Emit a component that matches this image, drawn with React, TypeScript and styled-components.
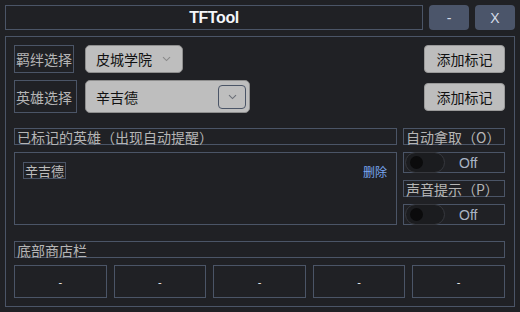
import { createGlobalStyle } from "styled-components"
import styled from "styled-components"

const GlobalStyle = createGlobalStyle`
  html, body {
    margin: 0;
    padding: 0;
    background: #202125;
  }
  body {
    font-family: "Liberation Sans", "Noto Sans CJK SC", sans-serif;
    font-size: 14px;
    color: #b8b8b8;
  }
  * {
    box-sizing: border-box;
    white-space: nowrap;
  }
`

const line = "#4b5567"

const Window = styled.div`
  width: 520px;
  height: 312px;
  padding: 5px 5px 0 5px;
  display: flex;
  flex-direction: column;
  gap: 6px;
  background: #202125;
`

const TitleRow = styled.div`
  display: flex;
  gap: 6px;
  height: 25px;
`

const TitleBox = styled.div`
  flex: 1;
  border: 1px solid ${line};
  display: flex;
  align-items: center;
  justify-content: center;
  color: #f4f6fa;
  font-weight: bold;
  font-size: 16px;
  letter-spacing: -0.4px;
`

const WinButton = styled.div`
  width: 40px;
  border-radius: 4px;
  background: #4b556a;
  color: #d4dbe8;
  display: flex;
  align-items: center;
  justify-content: center;
  font-size: 14px;
`

const Panel = styled.div`
  height: 271px;
  border: 1px solid ${line};
  padding: 8px 9px 8px 8px;
  display: flex;
  flex-direction: column;
`

const PickRow = styled.div<{ $h: number; $mt?: number }>`
  display: flex;
  align-items: center;
  height: ${(p) => p.$h}px;
  margin-top: ${(p) => p.$mt ?? 0}px;
`

const FieldLabel = styled.div<{ $w: number }>`
  flex-shrink: 0;
  width: ${(p) => p.$w}px;
  height: 100%;
  margin-right: ${(p) => 71 - p.$w}px;
  border: 1px solid ${line};
  display: flex;
  align-items: center;
  padding-left: 1px;
  font-family: "Noto Sans CJK SC", sans-serif;
  color: #b5b5b5;
  font-size: 14px;
`

const Select = styled.div<{ $w: number }>`
  flex-shrink: 0;
  width: ${(p) => p.$w}px;
  height: 100%;
  background: #bebebe;
  border: 1px solid #8e8e8e;
  border-radius: 5px;
  display: flex;
  align-items: center;
  padding-left: 10px;
  padding-right: 3px;
  color: #111;
  font-family: "Noto Sans CJK SC", sans-serif;
  font-size: 14px;
`

const SelectText = styled.span`
  flex: 1;
`

const Chevron = styled.div<{ $boxed?: boolean }>`
  flex-shrink: 0;
  width: 28px;
  height: ${(p) => (p.$boxed ? "24px" : "auto")};
  border: ${(p) => (p.$boxed ? `1px solid ${line}` : "none")};
  border-radius: 4px;
  display: flex;
  align-items: center;
  justify-content: center;
  margin-right: ${(p) => (p.$boxed ? "0" : "2px")};
`

const Spacer = styled.div`
  flex: 1;
`

const AddButton = styled.div`
  flex-shrink: 0;
  width: 81px;
  height: 28px;
  background: #bdbdbd;
  border: 1px solid #9a9a9a;
  border-radius: 4px;
  color: #111;
  display: flex;
  align-items: center;
  justify-content: center;
  font-family: "Noto Sans CJK SC", sans-serif;
  font-size: 14px;
`

const Middle = styled.div`
  margin-top: 15px;
  display: grid;
  grid-template-columns: 383px 102px;
  grid-template-rows: 17px 21px 17px 21px;
  column-gap: 6px;
  row-gap: 7px;
`

const HeadBox = styled.div`
  border: 1px solid ${line};
  height: 17px;
  display: flex;
  align-items: center;
  padding-left: 2px;
  font-family: "Noto Sans CJK SC", sans-serif;
  font-size: 14px;
  color: #b5b5b5;
  line-height: 14px;
`

const ListBox = styled.div`
  grid-column: 1;
  grid-row: 2 / span 3;
  border: 1px solid ${line};
  padding: 8px 9px 0 8px;
`

const ListItem = styled.div`
  display: flex;
  align-items: center;
  justify-content: space-between;
`

const Tag = styled.div`
  border: 1px solid ${line};
  height: 17px;
  padding: 0 1px;
  display: flex;
  align-items: center;
  font-family: "Noto Sans CJK SC", sans-serif;
  font-size: 13px;
  line-height: 13px;
  color: #bdbdbd;
`

const DeleteLink = styled.span`
  color: #79a7f2;
  font-family: "Noto Sans CJK SC", sans-serif;
  font-size: 12px;
  margin-top: 2px;
`

const ToggleBox = styled.div`
  border: 1px solid ${line};
  display: flex;
  align-items: center;
  padding-left: 1px;
`

const Pill = styled.div`
  flex-shrink: 0;
  width: 40px;
  height: 21px;
  border-radius: 11px;
  background: #1b1c1f;
  border: 1px solid #36383e;
  display: flex;
  align-items: center;
  padding-left: 4px;
`

const Knob = styled.div`
  width: 13px;
  height: 13px;
  border-radius: 50%;
  background: #0b0b0c;
`

const ToggleText = styled.span`
  margin-left: 14px;
  color: #a9b4c4;
  font-size: 14px;
`

const ShopHead = styled(HeadBox)`
  margin-top: 16px;
`

const ShopRow = styled.div`
  margin-top: 7px;
  display: flex;
  gap: 7px;
`

const Slot = styled.div`
  flex: 1;
  height: 33px;
  border: 1px solid ${line};
  display: flex;
  align-items: center;
  justify-content: center;
  color: #f2f2f2;
  font-size: 11px;
`

const ChevronIcon = ({ color }: { color: string }) => (
  <svg width="9" height="6" viewBox="0 0 9 6">
    <path d="M1 1.2 L4.5 4.6 L8 1.2" fill="none" stroke={color} strokeWidth="1.1" />
  </svg>
)

const Toggle = () => (
  <ToggleBox>
    <Pill>
      <Knob />
    </Pill>
    <ToggleText>Off</ToggleText>
  </ToggleBox>
)

export default function App() {
  const slots = ["-", "-", "-", "-", "-"]
  return (
    <>
      <GlobalStyle />
      <Window>
        <TitleRow>
          <TitleBox>TFTool</TitleBox>
          <WinButton>-</WinButton>
          <WinButton>X</WinButton>
        </TitleRow>
        <Panel>
          <PickRow $h={28}>
            <FieldLabel $w={60}>羁绊选择</FieldLabel>
            <Select $w={98}>
              <SelectText>皮城学院</SelectText>
              <Chevron>
                <ChevronIcon color="#8a8a8a" />
              </Chevron>
            </Select>
            <Spacer />
            <AddButton>添加标记</AddButton>
          </PickRow>
          <PickRow $h={33} $mt={7}>
            <FieldLabel $w={63}>英雄选择</FieldLabel>
            <Select $w={165}>
              <SelectText>辛吉德</SelectText>
              <Chevron $boxed>
                <ChevronIcon color="#6b6f78" />
              </Chevron>
            </Select>
            <Spacer />
            <AddButton>添加标记</AddButton>
          </PickRow>
          <Middle>
            <HeadBox>已标记的英雄（出现自动提醒）</HeadBox>
            <HeadBox>自动拿取（O）</HeadBox>
            <ListBox>
              <ListItem>
                <Tag>辛吉德</Tag>
                <DeleteLink>删除</DeleteLink>
              </ListItem>
            </ListBox>
            <Toggle />
            <HeadBox>声音提示（P）</HeadBox>
            <Toggle />
          </Middle>
          <ShopHead>底部商店栏</ShopHead>
          <ShopRow>
            {slots.map((s, i) => (
              <Slot key={i}>{s}</Slot>
            ))}
          </ShopRow>
        </Panel>
      </Window>
    </>
  )
}
